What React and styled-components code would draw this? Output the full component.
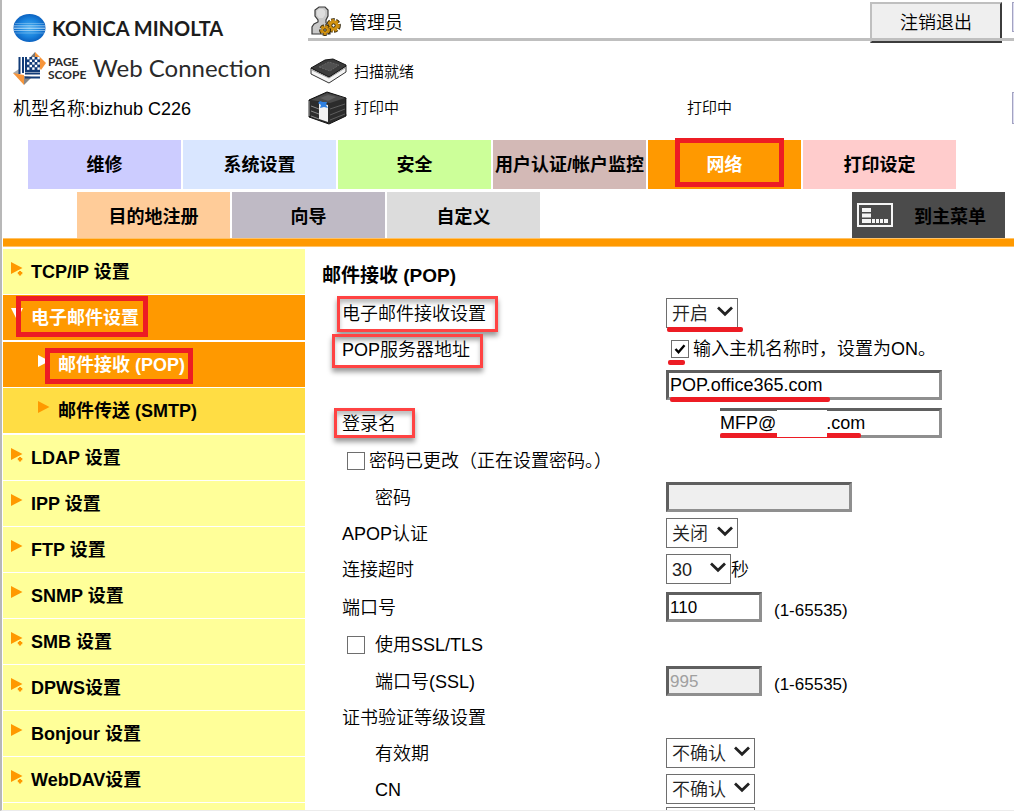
import React, { useId } from "react";
import styled, { createGlobalStyle, css } from "styled-components";

const GlobalStyle = createGlobalStyle`
  * { box-sizing: border-box; }
  body {
    margin: 0;
    background: #fff;
    color: #000;
    font-family: "Liberation Sans", "Noto Sans CJK SC", sans-serif;
    font-size: 18px;
    line-height: 24px;
    font-weight: 350;
  }
  input, select, button { font: inherit; color: inherit; }
  a { color: inherit; text-decoration: none; }
`;

const Page = styled.div`
  height: 100vh;
  overflow: hidden;
  padding-left: 1px;
  border-left: 2px solid #b8b8b8;
  border-bottom: 1px solid #ececec;
`;

/* ---------- header ---------- */
const Header = styled.header`
  display: flex;
  min-height: 140px;
`;
const Brand = styled.div`
  flex: 0 0 305px;
  padding: 8px 0 12px 10px;
`;
const BrandRow = styled.div`
  display: flex;
  align-items: center;
  height: 40px;
  white-space: nowrap;
`;
const Model = styled(BrandRow)`
  padding-top: 2px;
`;
const Maker = styled.span`
  margin-left: 6px;
  font-family: Lato, sans-serif;
  font-size: 20px;
  font-weight: 700;
  color: #1c1c1c;
`;
const PageScope = styled.span`
  display: flex;
  flex-direction: column;
  width: 45px;
  margin-left: 2px;
  font-family: Lato, sans-serif;
  font-size: 12px;
  line-height: 13px;
  font-weight: 700;
  color: #2a2a2a;
`;
const Product = styled.span`
  font-family: Lato, sans-serif;
  font-size: 24px;
  font-weight: 400;
  color: #2a2a2a;
`;
const Info = styled.div`
  flex: 1;
  min-width: 0;
`;
const AdminBar = styled.div`
  position: relative;
  display: flex;
  height: 41px;
  padding-top: 2px;
  &::after {
    content: "";
    position: absolute;
    left: 0;
    right: 0;
    bottom: 0;
    height: 3px;
    background: #bfbfbf;
  }
`;
const User = styled.div`
  display: flex;
  align-items: center;
  gap: 8px;
  padding: 3px 0 0 3px;
  svg {
    margin-bottom: 4px;
  }
`;
const LogoutButton = styled.button`
  width: 132px;
  height: 41px;
  margin-left: auto;
  padding: 0;
  background: #efefef;
  border: 2px solid;
  border-color: #bfbfbf #3c3c3c #3c3c3c #bfbfbf;
`;
const EdgeButton = styled.button`
  width: 2px;
  height: ${(p) => p.$height}px;
  margin-left: ${(p) => p.$gap || "auto"};
  padding: 0;
  border: 1px solid #a3a3c2;
  border-right: 0;
  background: #dcdcf0;
`;
const Status = styled.div`
  display: flex;
  flex-direction: column;
  padding-top: 13px;
  font-size: 15px;
`;
const StatusRow = styled.div`
  display: grid;
  grid-template-columns: 46px 333px 1fr auto;
  align-items: center;
  height: 36px;
`;

/* ---------- tabs ---------- */
const TabRow = styled.nav`
  display: flex;
  gap: 2px;
  padding: 0 9px 0 ${(p) => p.$indent}px;
  margin-bottom: ${(p) => p.$below || 0}px;
`;
const Tab = styled.a`
  position: relative;
  display: flex;
  align-items: center;
  justify-content: center;
  width: 153px;
  height: 49px;
  background: ${(p) => p.$bg};
  color: ${(p) => p.$fg || "#000"};
  font-weight: 700;
  white-space: nowrap;
`;
const LowTab = styled(Tab)`
  height: 46px;
  padding-top: 3px;
`;
const MenuTab = styled(LowTab)`
  margin-left: auto;
  justify-content: space-between;
  padding: 3px 19px 0 5px;
  svg {
    margin-bottom: 4px;
  }
`;
const Bar = styled.div`
  height: 9px;
  margin-bottom: 2px;
  background: #ff9900;
  border: solid #ffc266;
  border-width: 1px 0;
`;

/* ---------- overlay marks ---------- */
const Mark = styled.span`
  position: absolute;
  left: ${(p) => p.$left}px;
  top: ${(p) => p.$top}px;
  width: ${(p) => p.$width}px;
  height: ${(p) => p.$height}px;
  border: 5px solid #ed1c24;
  pointer-events: none;
`;
const SoftMark = styled(Mark)`
  border: 3px solid #ff4343;
  box-shadow: 0 4px 5px rgba(0, 0, 0, 0.4), inset 0 4px 4px rgba(0, 0, 0, 0.25);
`;
const Underline = styled.span`
  position: absolute;
  left: ${(p) => p.$left}px;
  bottom: ${(p) => p.$bottom}px;
  width: ${(p) => p.$width}px;
  height: 5px;
  border-radius: 2px;
  background: #ed1c24;
  pointer-events: none;
`;
const Blank = styled.span`
  position: absolute;
  left: 57px;
  top: 2px;
  width: 50px;
  height: 27px;
  background: #fff;
`;

/* ---------- body ---------- */
const Body = styled.div`
  display: flex;
  align-items: flex-start;
`;
const Side = styled.nav`
  flex: 0 0 302px;
  font-weight: 700;
`;
const SideLink = styled.a`
  position: relative;
  display: flex;
  align-items: center;
  height: 46px;
  padding-left: 8px;
  border-bottom: 1px solid #fff;
  background: ${(p) => (p.$active ? "#ff9900" : "#ffff99")};
  color: ${(p) => (p.$active ? "#fff" : "#000")};
  svg {
    width: 14px;
    height: 16px;
    margin: 0 6px 6px 0;
  }
  ${(p) =>
    p.$sub &&
    css`
      padding-left: 35px;
      ${p.$active ? "" : "background: #ffdd44;"}
    `}
`;
const SubMenu = styled.div`
  padding: 1px 0;
`;
const Main = styled.main`
  flex: 1;
  min-width: 0;
  padding-left: 17px;
`;
const Title = styled.h1`
  height: 46px;
  margin: 0;
  padding-top: 8px;
  font-size: 19px;
  line-height: 38px;
  font-weight: 700;
`;
const Row = styled.div`
  position: relative;
  display: grid;
  grid-template-columns: 324px 1fr;
  align-items: ${(p) => (p.$top ? "start" : "center")};
  height: ${(p) => (p.$tall ? 40 : 36)}px;
  margin-left: 20px;
  white-space: nowrap;
`;
const Label = styled.label`
  padding: 2px 0 0 ${(p) => (p.$indent ? 33 : 0)}px;
`;
const Cell = styled.div`
  position: relative;
  display: flex;
  align-items: center;
`;
const CheckCell = styled.div`
  display: flex;
  align-items: center;
  gap: ${(p) => p.$gap}px;
  padding-left: 5px;
`;
const Check = styled.input`
  appearance: none;
  flex: none;
  width: 18px;
  height: 18px;
  margin: 0;
  border: 1px solid #6e6e6e;
  background: #fff;
  &:checked {
    background: #fff
      url("data:image/svg+xml,%3Csvg xmlns='http://www.w3.org/2000/svg' viewBox='0 0 16 16'%3E%3Cpath d='M3.5 8l3 3.2 6-7' fill='none' stroke='%23000' stroke-width='2.4'/%3E%3C/svg%3E");
  }
`;
const Field = styled.input`
  width: ${(p) => p.$width}px;
  height: 30px;
  padding: 1px 1px 0;
  border: 3px solid;
  border-color: #5f5f5f #8f8f8f #8f8f8f #5f5f5f;
  border-radius: 0;
  background: #fff;
  &:disabled {
    background: #efefef;
    color: #a0a0a0;
  }
`;
const NumberField = styled(Field)`
  font-size: 17px;
`;
const LoginField = styled(Field)`
  border-left: 0;
  padding: 1px 0 0;
`;
const LoginBox = styled.div`
  position: relative;
  display: flex;
  margin-left: 54px;
`;
const Range = styled.span`
  margin-left: 12px;
  padding-top: 8px;
  font-size: 17px;
`;
const SelectBox = styled.div`
  position: relative;
  display: flex;
  justify-self: start;
  svg {
    position: absolute;
    right: 5px;
    top: 8px;
    pointer-events: none;
  }
`;
const SelectInput = styled.select`
  appearance: none;
  width: ${(p) => p.$width}px;
  height: 30px;
  padding: 1px 0 0 5px;
  border: 1px solid #6e6e6e;
  border-radius: 0;
  background: #fff;
  color: #222;
`;

function Select({ id, width, options, label }) {
  return (
    <SelectBox>
      <SelectInput id={id} $width={width} aria-label={label}>
        {options.map((o) => (
          <option key={o}>{o}</option>
        ))}
      </SelectInput>
      <svg width="16" height="12" viewBox="0 0 16 12" aria-hidden="true">
        <path d="M1 1.5 8 8.2 15 1.5" fill="none" stroke="#222" strokeWidth="2.8" />
      </svg>
    </SelectBox>
  );
}

function Arrow({ plus, down }) {
  return (
    <svg viewBox="0 0 14 16" aria-hidden="true">
      {down ? <path d="M0 1h12L6 13z" fill="currentColor" /> : <path d="M0 1v12l11.5-6z" fill="currentColor" />}
      {plus && (
        <>
          <circle cx="9" cy="12" r="3" fill="#ffff99" />
          <path d="M9 10v4.500M6.800 12.200h4.500" stroke="currentColor" strokeWidth="2.200" />
        </>
      )}
    </svg>
  );
}

const ArrowTint = styled.span`
  display: flex;
  color: ${(p) => (p.$active ? "#fff" : "#ff9900")};
`;

function SideItem({ text, plus, down, active, sub, children }) {
  return (
    <SideLink href="#" $active={active} $sub={sub}>
      <ArrowTint $active={active}>
        <Arrow plus={plus} down={down} />
      </ArrowTint>
      {text}
      {children}
    </SideLink>
  );
}

function Globe() {
  return (
    <svg width="33" height="30" viewBox="0 0 33 30" aria-hidden="true">
      <defs>
        <radialGradient id="globe" cx="50%" cy="50%" r="52%">
          <stop offset="0" stopColor="#4aaef0" />
          <stop offset="0.6" stopColor="#1a84de" />
          <stop offset="1" stopColor="#0a5fbe" />
        </radialGradient>
      </defs>
      <ellipse cx="16.500" cy="15" rx="16" ry="14" fill="url(#globe)" />
      <g stroke="#d5ecfb">
        <path d="M2 10.500h29" strokeWidth=".5" opacity=".7" />
        <path d="M1 12.800h31" strokeWidth=".8" opacity=".8" />
        <path d="M1 15.200h31" strokeWidth="1" opacity=".9" />
        <path d="M1 17.600h31" strokeWidth=".8" opacity=".8" />
        <path d="M2 20h29" strokeWidth=".5" opacity=".7" />
      </g>
    </svg>
  );
}

function ScopeIcon() {
  const dots = [];
  for (let r = 0; r < 5; r++)
    for (let c = 0; c < 5; c++)
      if ((r + c) % 2 === 0) dots.push(<rect key={`${r}${c}`} x={14 + c * 2.6} y={5 + r * 2.6} width="2.400" height="2.400" fill="#fff" />);
  return (
    <svg width="33" height="33" viewBox="0 0 33 33" aria-hidden="true">
      <path d="M14 9 22 0l3 8z" fill="#777" />
      <path d="M22 0l11 11-5 7-6-8z" fill="#f7953a" />
      <path d="M0 21l6-4v8z" fill="#aaa" />
      <path d="M0 21l11 2v10z" fill="#f7953a" />
      <path d="M11 33V24l8 1z" fill="#888" />
      <rect x="12" y="5" width="15" height="15" fill="#123c78" />
      {dots}
      <path d="M6.500 5v17M10 5v16" stroke="#123c78" strokeWidth="2" />
      <path d="M12 21.500h15M12 25.500h15" stroke="#123c78" strokeWidth="2.200" />
    </svg>
  );
}

function Gear({ cx, cy, r }) {
  return (
    <g>
      <circle cx={cx} cy={cy} r={r} fill="none" stroke="#2b2005" strokeWidth="4.600" strokeDasharray="3 1.200" />
      <circle cx={cx} cy={cy} r={r} fill="#c88a10" stroke="#c88a10" strokeWidth="2.800" strokeDasharray="2.600 1.600" />
      <circle cx={cx} cy={cy} r={r - 0.5} fill="#d2930f" />
      <circle cx={cx} cy={cy} r={r / 3} fill="#fff" stroke="#2b2005" strokeWidth="1" />
    </g>
  );
}

function AdminIcon() {
  return (
    <svg width="30" height="30" viewBox="0 0 30 30" aria-hidden="true">
      <path
        d="M8 1h6l3 3v6l-2 4v3l4 2v9H1v-7l2-3 4-2v-2L4 10V4z"
        fill="#c9c9c9"
        stroke="#3a3a3a"
        strokeWidth="1.200"
      />
      <path d="M8 3h4l2 2v4l-2 3H8L6 9V5z" fill="#dedede" />
      <Gear cx={22.500} cy={19.500} r={5} />
      <Gear cx={14} cy={24} r={3.6} />
    </svg>
  );
}

function ScannerIcon() {
  return (
    <svg width="40" height="28" viewBox="0 0 40 28" aria-hidden="true">
      <path d="M3 10v6l18 9 17-11V8L21 19z" fill="#f4f4f4" stroke="#333" strokeWidth="1" />
      <path d="M3 10 17 2l8-1 13 6v1L21 19z" fill="#3b3b3b" stroke="#151515" strokeWidth="1" />
      <path d="M11 9l10-5 10 3-9 6z" fill="#505050" stroke="#777" strokeWidth=".6" strokeDasharray="2 1" />
      <path d="M4 12l17 8 16-10" fill="none" stroke="#888" strokeWidth=".8" />
    </svg>
  );
}

function PrinterIcon() {
  return (
    <svg width="40" height="34" viewBox="0 0 40 34" aria-hidden="true">
      <path d="M1 9 19 1l19 6v18l-17 8L1 26z" fill="#2c2c2c" stroke="#111" strokeWidth="1" />
      <path d="M3 9 19 2l18 5-15 5z" fill="#4b4b4b" />
      <path d="M12 7l8-3 8 2-8 4z" fill="#606060" />
      <path d="M3 15l8 3M3 20l8 3M3 25l8 3" stroke="#8b8b8b" strokeWidth="1" />
      <path d="M22 18l15-5M22 24l15-6M22 29l15-6" stroke="#5d5d5d" strokeWidth="1" />
      <path d="M1 10v15M38.500 8v15" stroke="#aaa" strokeWidth="1" />
      <path d="M11 12l9 2v17l-9-3z" fill="#f2f2f2" />
      <path d="M12 10l3 1 4 0-1 3 2 3-4-1-4 1 1-3-3-2z" fill="#2f80e0" />
    </svg>
  );
}

function PanelIcon() {
  return (
    <svg width="36" height="24" viewBox="0 0 36 24" aria-hidden="true">
      <rect x="1" y="1" width="34" height="22" fill="#4b4b4b" stroke="#f5f5f5" strokeWidth="2" />
      <path d="M5 7h9M5 12.500h9" stroke="#f5f5f5" strokeWidth="4" />
      <path d="M5 18h9M15 18h3M19 18h3M23 18h3M27 18h4" stroke="#f5f5f5" strokeWidth="4" />
    </svg>
  );
}

const afterItems = [
  ["LDAP 设置", true],
  ["IPP 设置", false],
  ["FTP 设置", false],
  ["SNMP 设置", false],
  ["SMB 设置", true],
  ["DPWS设置", true],
  ["Bonjour 设置", false],
  ["WebDAV设置", true],
  ["", false],
];

export default function App() {
  const id = useId();
  return (
    <Page>
      <GlobalStyle />
      <Header>
        <Brand>
          <BrandRow>
            <Globe />
            <Maker>KONICA MINOLTA</Maker>
          </BrandRow>
          <BrandRow>
            <ScopeIcon />
            <PageScope>
              <span>PAGE</span>
              <span>SCOPE</span>
            </PageScope>
            <Product>Web Connection</Product>
          </BrandRow>
          <Model>机型名称:bizhub C226</Model>
        </Brand>
        <Info>
          <AdminBar>
            <User>
              <AdminIcon />
              管理员
            </User>
            <LogoutButton>注销退出</LogoutButton>
            <EdgeButton $height={30} $gap="10px" aria-label="帮助" />
          </AdminBar>
          <Status>
            <StatusRow>
              <ScannerIcon />
              扫描就绪
            </StatusRow>
            <StatusRow>
              <PrinterIcon />
              <span>打印中</span>
              <span>打印中</span>
              <EdgeButton $height={32} aria-label="刷新" />
            </StatusRow>
          </Status>
        </Info>
      </Header>

      <TabRow $indent={25} $below={3}>
        <Tab href="#" $bg="#ccccff">维修</Tab>
        <Tab href="#" $bg="#d9e6ff">系统设置</Tab>
        <Tab href="#" $bg="#ccff99">安全</Tab>
        <Tab href="#" $bg="#d3b9b6">用户认证/帐户监控</Tab>
        <Tab href="#" $bg="#ff9900" $fg="#fff">
          网络
          <Mark $left={27} $top={-2} $width={109} $height={49} />
        </Tab>
        <Tab href="#" $bg="#ffcccc">打印设定</Tab>
      </TabRow>
      <TabRow $indent={74}>
        <LowTab href="#" $bg="#ffcc99">目的地注册</LowTab>
        <LowTab href="#" $bg="#bfbac5">向导</LowTab>
        <LowTab href="#" $bg="#dcdcdc">自定义</LowTab>
        <MenuTab href="#" $bg="#4b4b4b">
          <PanelIcon />
          到主菜单
        </MenuTab>
      </TabRow>
      <Bar />

      <Body>
        <Side>
          <SideItem text="TCP/IP 设置" plus />
          <SideItem text="电子邮件设置" active down>
            <Mark $left={13} $top={1} $width={132} $height={41} />
          </SideItem>
          <SubMenu>
            <SideItem text="邮件接收 (POP)" active sub>
              <Mark $left={42} $top={6} $width={148} $height={36} />
            </SideItem>
            <SideItem text="邮件传送 (SMTP)" sub />
          </SubMenu>
          {afterItems.map(([text, plus]) => (
            <SideItem key={text} text={text} plus={plus} />
          ))}
        </Side>

        <Main>
          <Title>邮件接收 (POP)</Title>
          <Row>
            <Label htmlFor={`${id}rx`}>电子邮件接收设置</Label>
            <Cell>
              <Select id={`${id}rx`} width={72} options={["开启", "关闭"]} />
              <Underline $left={1} $bottom={-4} $width={76} />
            </Cell>
            <SoftMark $left={-5} $top={1} $width={161} $height={36} />
          </Row>
          <Row>
            <Label htmlFor={`${id}host`}>POP服务器地址</Label>
            <Cell>
              <CheckCell $gap={4}>
                <Check id={`${id}byname`} type="checkbox" defaultChecked />
                <label htmlFor={`${id}byname`}>输入主机名称时，设置为ON。</label>
              </CheckCell>
              <Underline $left={2} $bottom={-4} $width={17} />
            </Cell>
            <SoftMark $left={-10} $top={3} $width={151} $height={34} />
          </Row>
          <Row>
            <span />
            <Cell>
              <Field id={`${id}host`} $width={276} defaultValue="POP.office365.com" />
              <Underline $left={4} $bottom={-2} $width={160} />
            </Cell>
          </Row>
          <Row $tall>
            <Label htmlFor={`${id}login`}>登录名</Label>
            <Cell>
              <LoginBox>
                <LoginField id={`${id}login`} $width={222} defaultValue="MFP@          .com" />
                <Underline $left={0} $bottom={0} $width={141} />
                <Blank />
              </LoginBox>
            </Cell>
            <SoftMark $left={-8} $top={5} $width={81} $height={30} />
          </Row>
          <Row>
            <CheckCell $gap={4}>
              <Check id={`${id}pwc`} type="checkbox" />
              <label htmlFor={`${id}pwc`}>密码已更改（正在设置密码。）</label>
            </CheckCell>
          </Row>
          <Row>
            <Label $indent htmlFor={`${id}pw`}>密码</Label>
            <Field id={`${id}pw`} type="password" $width={186} disabled />
          </Row>
          <Row>
            <Label htmlFor={`${id}apop`}>APOP认证</Label>
            <Select id={`${id}apop`} width={72} options={["关闭", "开启"]} />
          </Row>
          <Row>
            <Label htmlFor={`${id}to`}>连接超时</Label>
            <Cell>
              <Select id={`${id}to`} width={65} options={["30", "60"]} />
              <Label as="span">秒</Label>
            </Cell>
          </Row>
          <Row $tall>
            <Label htmlFor={`${id}port`}>端口号</Label>
            <Cell>
              <NumberField id={`${id}port`} $width={96} defaultValue="110" />
              <Range>(1-65535)</Range>
            </Cell>
          </Row>
          <Row>
            <CheckCell $gap={10}>
              <Check id={`${id}ssl`} type="checkbox" />
              <label htmlFor={`${id}ssl`}>使用SSL/TLS</label>
            </CheckCell>
          </Row>
          <Row>
            <Label $indent htmlFor={`${id}sslport`}>端口号(SSL)</Label>
            <Cell>
              <NumberField id={`${id}sslport`} $width={96} defaultValue="995" disabled />
              <Range>(1-65535)</Range>
            </Cell>
          </Row>
          <Row>
            <Label as="span">证书验证等级设置</Label>
          </Row>
          <Row>
            <Label $indent htmlFor={`${id}exp`}>有效期</Label>
            <Select id={`${id}exp`} width={89} options={["不确认", "确认"]} />
          </Row>
          <Row>
            <Label $indent htmlFor={`${id}cn`}>CN</Label>
            <Select id={`${id}cn`} width={89} options={["不确认", "确认"]} />
          </Row>
          <Row $top>
            <span />
            <Select label="密钥用法" width={89} options={["不确认", "确认"]} />
          </Row>
        </Main>
      </Body>
    </Page>
  );
}
